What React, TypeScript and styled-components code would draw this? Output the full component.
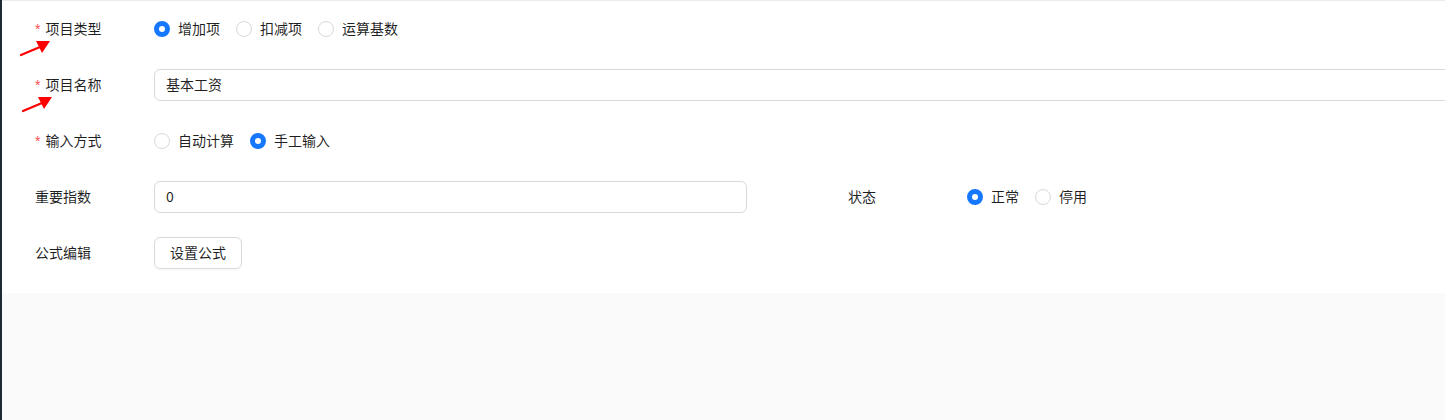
import React from 'react'
import styled, { createGlobalStyle } from 'styled-components'

const GlobalStyle = createGlobalStyle`
  html, body {
    margin: 0;
    padding: 0;
    background: #fafafa;
    overflow: hidden;
  }
  body {
    font-family: 'Noto Sans CJK SC', 'Noto Sans', sans-serif;
    font-size: 14px;
    color: rgba(0, 0, 0, 0.88);
  }
`

interface RadioOption {
  label: string
  checked?: boolean
}

const RadioGroup = ({ options }: { options: RadioOption[] }) => (
  <Radios>
    {options.map((o) => (
      <RadioItem key={o.label}>
        <RadioDot checked={!!o.checked} />
        <RadioText>{o.label}</RadioText>
      </RadioItem>
    ))}
  </Radios>
)

const Arrow = ({ top, left }: { top: number; left: number }) => (
  <ArrowSvg style={{ top, left }} width="34" height="20" viewBox="0 0 34 20">
    <line x1="1" y1="17" x2="20" y2="9" stroke="#ff0000" strokeWidth="2.2" strokeLinecap="round" />
    <polygon points="30,3 16,3 22,15" fill="#ff0000" />
  </ArrowSvg>
)

const App = () => {
  return (
    <>
      <GlobalStyle />
      <Page>
        <Strip />
        <Main>
          <Panel>
            <Row>
              <Label required>项目类型</Label>
              <RadioGroup
                options={[{ label: '增加项', checked: true }, { label: '扣减项' }, { label: '运算基数' }]}
              />
            </Row>
            <Row>
              <Label required>项目名称</Label>
              <Input wide>基本工资</Input>
            </Row>
            <Row>
              <Label required>输入方式</Label>
              <RadioGroup options={[{ label: '自动计算' }, { label: '手工输入', checked: true }]} />
            </Row>
            <SplitRow>
              <Row>
                <Label>重要指数</Label>
                <Input>0</Input>
              </Row>
              <Row>
                <Label>状态</Label>
                <RadioGroup options={[{ label: '正常', checked: true }, { label: '停用' }]} />
              </Row>
            </SplitRow>
            <Row>
              <Label>公式编辑</Label>
              <Button>设置公式</Button>
            </Row>
            <Arrow top={37} left={18} />
            <Arrow top={93} left={20} />
          </Panel>
        </Main>
      </Page>
    </>
  )
}

const Page = styled.div`
  display: flex;
  width: 1445px;
  height: 420px;
  overflow: hidden;
`

const Strip = styled.div`
  width: 2px;
  flex-shrink: 0;
  background: #1c2a36;
`

const Main = styled.div`
  flex: 1;
  min-width: 0;
  overflow: hidden;
  border-top: 1px solid #ebebeb;
  background: #fafafa;
`

const Panel = styled.div`
  position: relative;
  display: flex;
  flex-direction: column;
  gap: 24px;
  background: #fff;
  width: 1700px;
  padding: 12px 0 24px 33px;
  box-sizing: border-box;
`

const Row = styled.div`
  display: flex;
  align-items: center;
  height: 32px;
`

const SplitRow = styled.div`
  display: grid;
  grid-template-columns: 713px 713px;
  column-gap: 100px;
`

const Label = styled.div<{ required?: boolean }>`
  width: 119px;
  flex-shrink: 0;
  line-height: 22px;
  padding-bottom: 2px;
  &::before {
    content: '*';
    display: ${(p) => (p.required ? 'inline-block' : 'none')};
    color: #ff4d4f;
    font-family: 'Liberation Sans', sans-serif;
    margin-right: 5px;
  }
`

const Radios = styled.div`
  display: flex;
  align-items: center;
`

const RadioItem = styled.label`
  display: flex;
  align-items: center;
  gap: 8px;
  margin-right: 16px;
`

const RadioText = styled.span`
  line-height: 22px;
  padding-bottom: 2px;
`

const RadioDot = styled.span<{ checked: boolean }>`
  width: 16px;
  height: 16px;
  box-sizing: border-box;
  border-radius: 50%;
  background: #fff;
  border: ${(p) => (p.checked ? '5px solid #1677ff' : '1px solid #d9d9d9')};
`

const Input = styled.div<{ wide?: boolean }>`
  box-sizing: border-box;
  width: ${(p) => (p.wide ? '1426px' : '593px')};
  height: 32px;
  padding: 3px 11px 5px;
  line-height: 22px;
  border: 1px solid #d9d9d9;
  border-radius: 6px;
  background: #fff;
`

const Button = styled.button`
  box-sizing: border-box;
  height: 32px;
  padding: 3px 15px 5px;
  font-family: inherit;
  font-size: 14px;
  line-height: 22px;
  color: rgba(0, 0, 0, 0.88);
  background: #fff;
  border: 1px solid #d9d9d9;
  border-radius: 6px;
  box-shadow: 0 2px 0 rgba(0, 0, 0, 0.02);
`

const ArrowSvg = styled.svg`
  position: absolute;
`

export default App
